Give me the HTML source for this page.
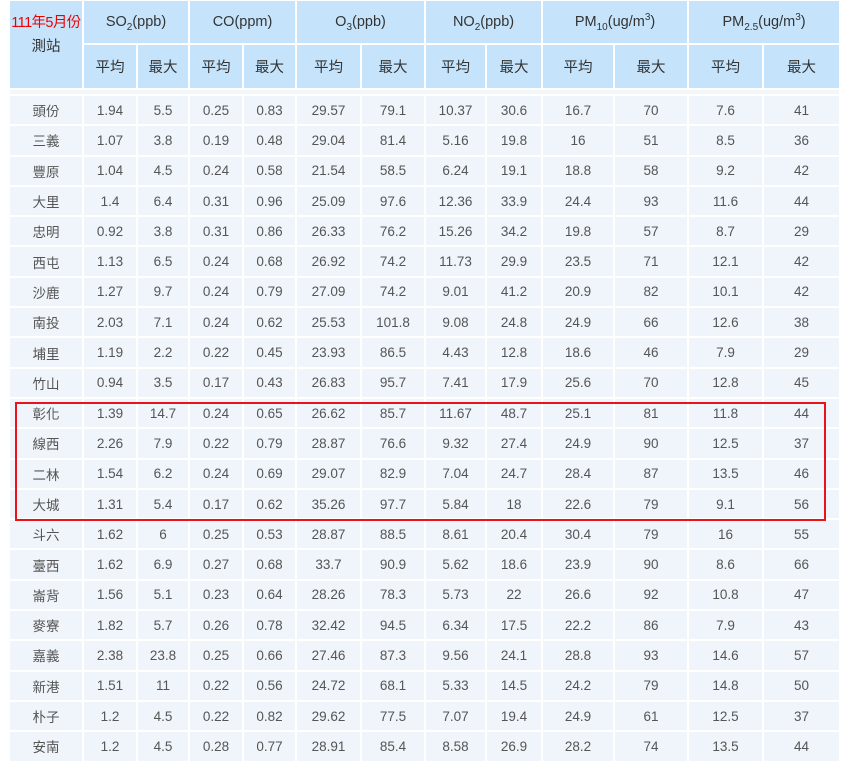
<!DOCTYPE html>
<html><head><meta charset="utf-8"><style>
body{margin:0;background:#fff;width:846px;height:768px;overflow:hidden;font-family:"Liberation Sans","Noto Sans CJK TC",sans-serif;}
table{position:absolute;left:8px;top:-1px;border-collapse:collapse;table-layout:fixed;width:831px;}
td,th{border:2px solid #fff;text-align:center;padding:0;font-weight:normal;}
th{background:#c5e4fb;color:#333;font-size:14.5px;}
td{background:#eff5fa;color:#555;font-size:13.5px;height:28.3px;}
tr.h1 th{height:42px}
tr.h2 th{height:43px}
tr.sp td{height:4px;background:#f3f7fa}
sub,sup{font-size:10px;line-height:0}
.red{color:#e00;font-size:14.5px;white-space:nowrap;letter-spacing:-0.6px;display:inline-block;margin-left:-4px;margin-right:-4px}
th.st{vertical-align:top;padding-top:10px;overflow:visible}
#box{position:absolute;left:15px;top:402px;width:807px;height:115px;border:2.5px solid #e8141a;}
</style></head><body>
<table>
<colgroup><col style="width:74px"><col style="width:54px"><col style="width:52px"><col style="width:54px"><col style="width:53px"><col style="width:65px"><col style="width:64px"><col style="width:61px"><col style="width:56px"><col style="width:72px"><col style="width:74px"><col style="width:75px"><col style="width:77px"></colgroup>
<tr class="h1"><th rowspan="2" class="st"><span class="red">111年5月份</span><br><span style="line-height:30px">測站</span></th><th colspan="2">SO<sub>2</sub>(ppb)</th><th colspan="2">CO(ppm)</th><th colspan="2">O<sub>3</sub>(ppb)</th><th colspan="2">NO<sub>2</sub>(ppb)</th><th colspan="2">PM<sub>10</sub>(ug/m<sup>3</sup>)</th><th colspan="2">PM<sub>2.5</sub>(ug/m<sup>3</sup>)</th></tr>
<tr class="h2"><th>平均</th><th>最大</th><th>平均</th><th>最大</th><th>平均</th><th>最大</th><th>平均</th><th>最大</th><th>平均</th><th>最大</th><th>平均</th><th>最大</th></tr>
<tr class="sp"><td colspan="13"></td></tr>
<tr><td>頭份</td><td>1.94</td><td>5.5</td><td>0.25</td><td>0.83</td><td>29.57</td><td>79.1</td><td>10.37</td><td>30.6</td><td>16.7</td><td>70</td><td>7.6</td><td>41</td></tr>
<tr><td>三義</td><td>1.07</td><td>3.8</td><td>0.19</td><td>0.48</td><td>29.04</td><td>81.4</td><td>5.16</td><td>19.8</td><td>16</td><td>51</td><td>8.5</td><td>36</td></tr>
<tr><td>豐原</td><td>1.04</td><td>4.5</td><td>0.24</td><td>0.58</td><td>21.54</td><td>58.5</td><td>6.24</td><td>19.1</td><td>18.8</td><td>58</td><td>9.2</td><td>42</td></tr>
<tr><td>大里</td><td>1.4</td><td>6.4</td><td>0.31</td><td>0.96</td><td>25.09</td><td>97.6</td><td>12.36</td><td>33.9</td><td>24.4</td><td>93</td><td>11.6</td><td>44</td></tr>
<tr><td>忠明</td><td>0.92</td><td>3.8</td><td>0.31</td><td>0.86</td><td>26.33</td><td>76.2</td><td>15.26</td><td>34.2</td><td>19.8</td><td>57</td><td>8.7</td><td>29</td></tr>
<tr><td>西屯</td><td>1.13</td><td>6.5</td><td>0.24</td><td>0.68</td><td>26.92</td><td>74.2</td><td>11.73</td><td>29.9</td><td>23.5</td><td>71</td><td>12.1</td><td>42</td></tr>
<tr><td>沙鹿</td><td>1.27</td><td>9.7</td><td>0.24</td><td>0.79</td><td>27.09</td><td>74.2</td><td>9.01</td><td>41.2</td><td>20.9</td><td>82</td><td>10.1</td><td>42</td></tr>
<tr><td>南投</td><td>2.03</td><td>7.1</td><td>0.24</td><td>0.62</td><td>25.53</td><td>101.8</td><td>9.08</td><td>24.8</td><td>24.9</td><td>66</td><td>12.6</td><td>38</td></tr>
<tr><td>埔里</td><td>1.19</td><td>2.2</td><td>0.22</td><td>0.45</td><td>23.93</td><td>86.5</td><td>4.43</td><td>12.8</td><td>18.6</td><td>46</td><td>7.9</td><td>29</td></tr>
<tr><td>竹山</td><td>0.94</td><td>3.5</td><td>0.17</td><td>0.43</td><td>26.83</td><td>95.7</td><td>7.41</td><td>17.9</td><td>25.6</td><td>70</td><td>12.8</td><td>45</td></tr>
<tr><td>彰化</td><td>1.39</td><td>14.7</td><td>0.24</td><td>0.65</td><td>26.62</td><td>85.7</td><td>11.67</td><td>48.7</td><td>25.1</td><td>81</td><td>11.8</td><td>44</td></tr>
<tr><td>線西</td><td>2.26</td><td>7.9</td><td>0.22</td><td>0.79</td><td>28.87</td><td>76.6</td><td>9.32</td><td>27.4</td><td>24.9</td><td>90</td><td>12.5</td><td>37</td></tr>
<tr><td>二林</td><td>1.54</td><td>6.2</td><td>0.24</td><td>0.69</td><td>29.07</td><td>82.9</td><td>7.04</td><td>24.7</td><td>28.4</td><td>87</td><td>13.5</td><td>46</td></tr>
<tr><td>大城</td><td>1.31</td><td>5.4</td><td>0.17</td><td>0.62</td><td>35.26</td><td>97.7</td><td>5.84</td><td>18</td><td>22.6</td><td>79</td><td>9.1</td><td>56</td></tr>
<tr><td>斗六</td><td>1.62</td><td>6</td><td>0.25</td><td>0.53</td><td>28.87</td><td>88.5</td><td>8.61</td><td>20.4</td><td>30.4</td><td>79</td><td>16</td><td>55</td></tr>
<tr><td>臺西</td><td>1.62</td><td>6.9</td><td>0.27</td><td>0.68</td><td>33.7</td><td>90.9</td><td>5.62</td><td>18.6</td><td>23.9</td><td>90</td><td>8.6</td><td>66</td></tr>
<tr><td>崙背</td><td>1.56</td><td>5.1</td><td>0.23</td><td>0.64</td><td>28.26</td><td>78.3</td><td>5.73</td><td>22</td><td>26.6</td><td>92</td><td>10.8</td><td>47</td></tr>
<tr><td>麥寮</td><td>1.82</td><td>5.7</td><td>0.26</td><td>0.78</td><td>32.42</td><td>94.5</td><td>6.34</td><td>17.5</td><td>22.2</td><td>86</td><td>7.9</td><td>43</td></tr>
<tr><td>嘉義</td><td>2.38</td><td>23.8</td><td>0.25</td><td>0.66</td><td>27.46</td><td>87.3</td><td>9.56</td><td>24.1</td><td>28.8</td><td>93</td><td>14.6</td><td>57</td></tr>
<tr><td>新港</td><td>1.51</td><td>11</td><td>0.22</td><td>0.56</td><td>24.72</td><td>68.1</td><td>5.33</td><td>14.5</td><td>24.2</td><td>79</td><td>14.8</td><td>50</td></tr>
<tr><td>朴子</td><td>1.2</td><td>4.5</td><td>0.22</td><td>0.82</td><td>29.62</td><td>77.5</td><td>7.07</td><td>19.4</td><td>24.9</td><td>61</td><td>12.5</td><td>37</td></tr>
<tr><td>安南</td><td>1.2</td><td>4.5</td><td>0.28</td><td>0.77</td><td>28.91</td><td>85.4</td><td>8.58</td><td>26.9</td><td>28.2</td><td>74</td><td>13.5</td><td>44</td></tr>
</table>
<div id="box"></div>
</body></html>
